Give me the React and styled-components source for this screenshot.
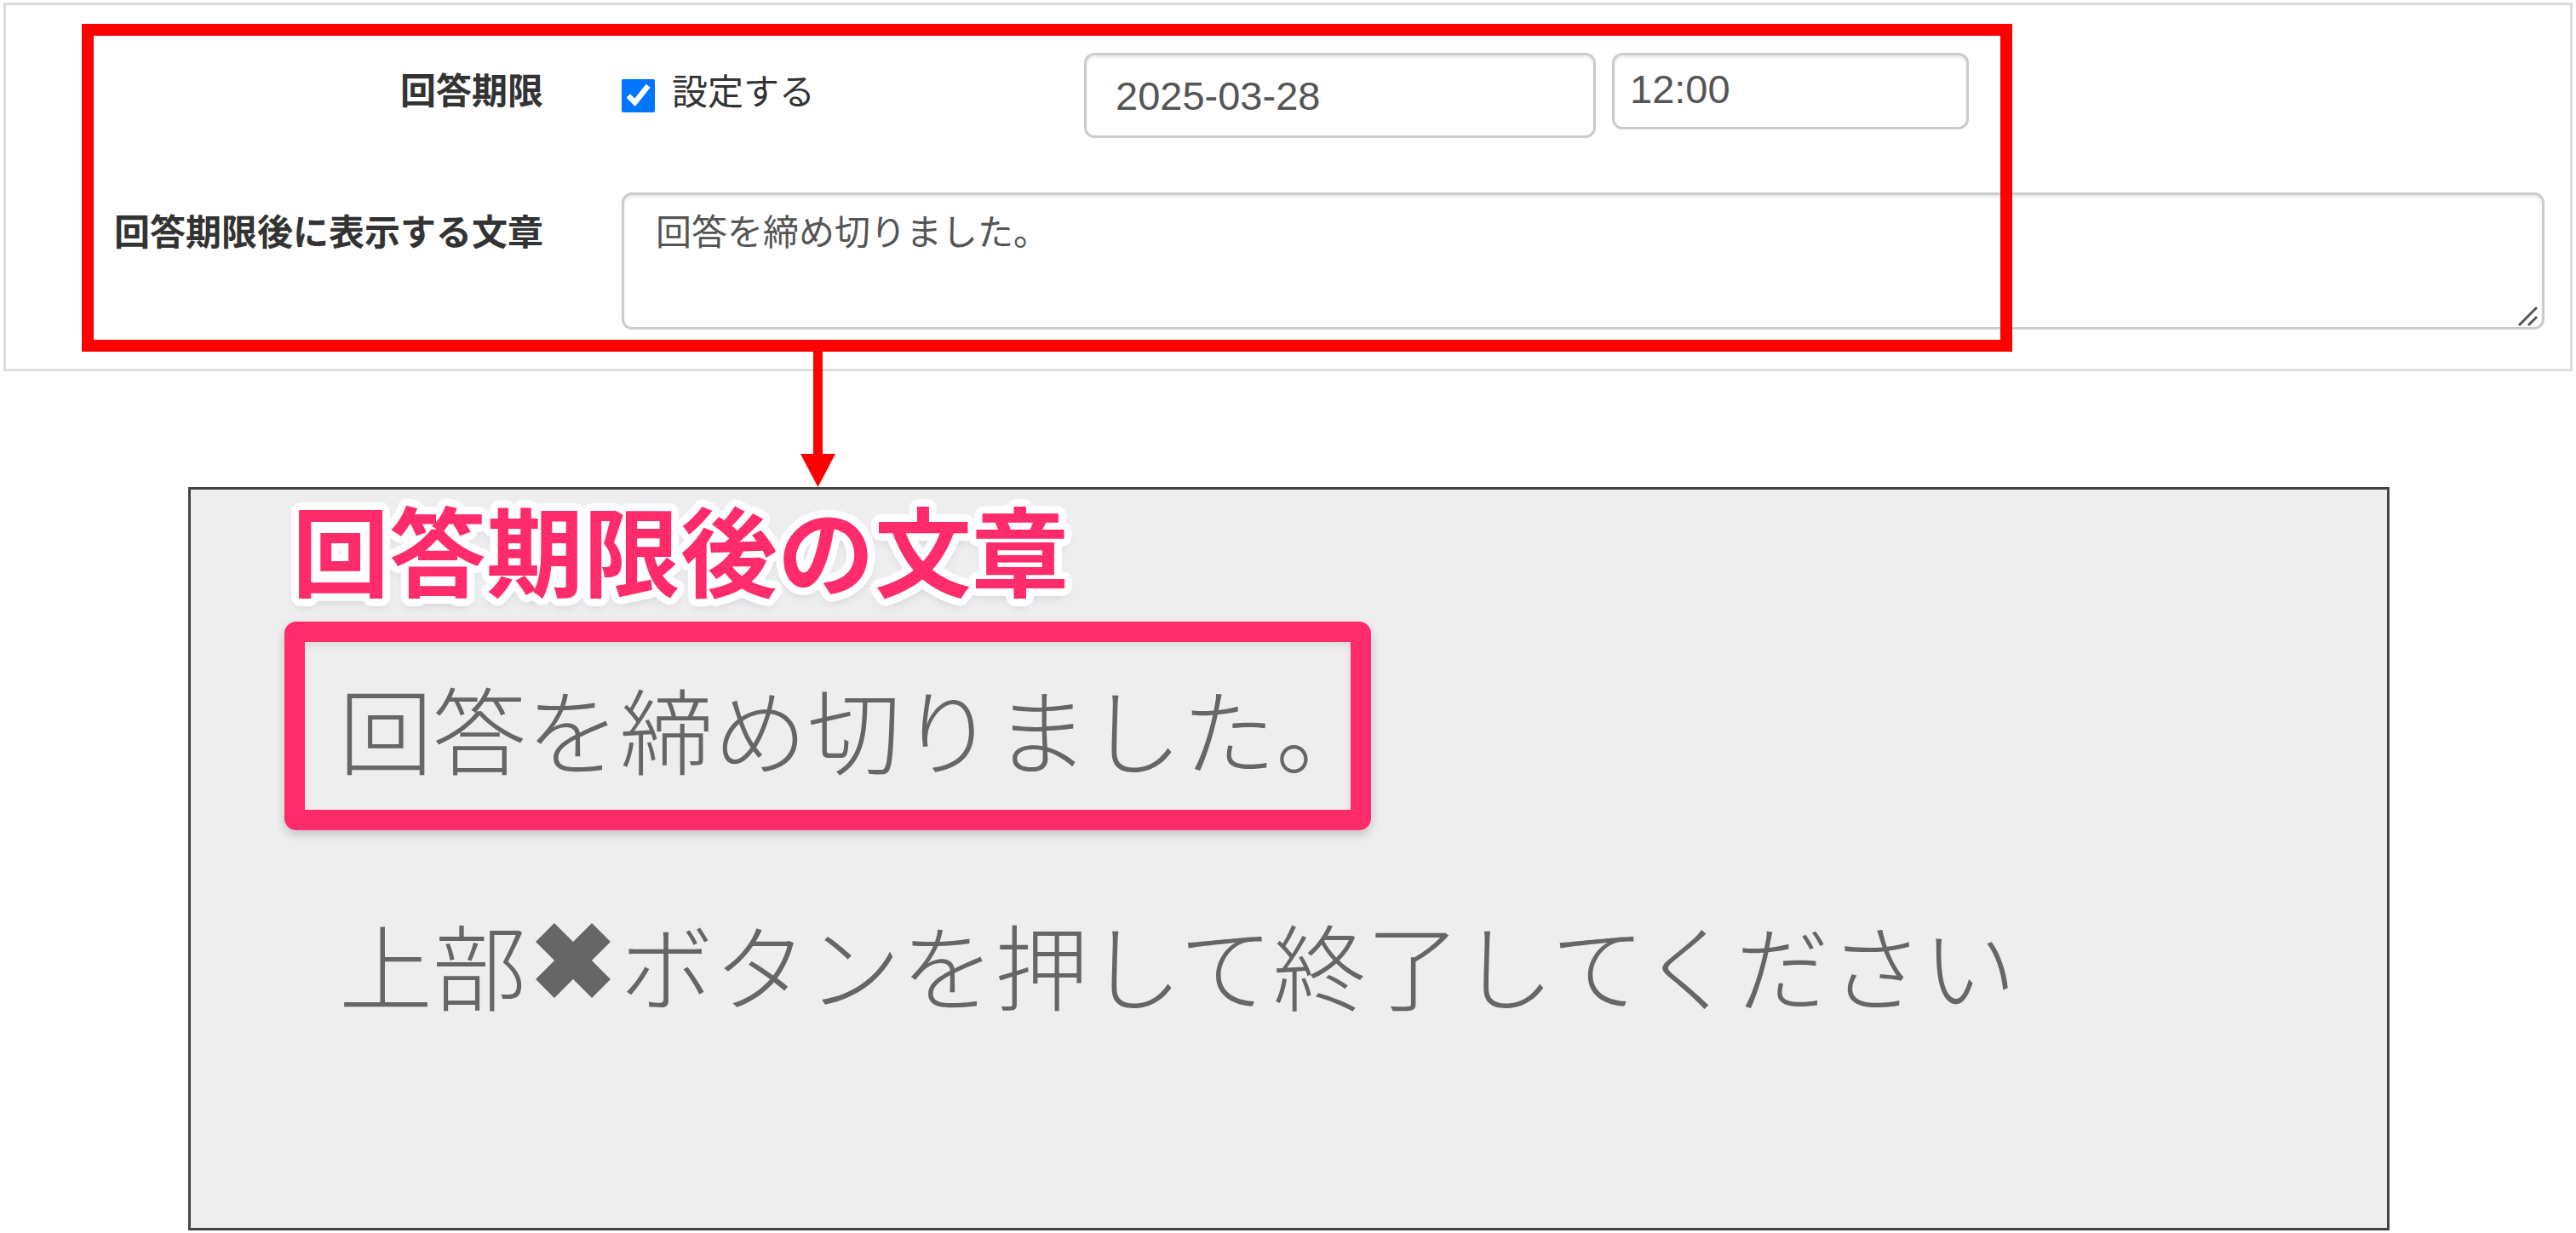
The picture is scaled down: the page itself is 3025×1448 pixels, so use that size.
import styled, { createGlobalStyle } from "styled-components";

const GlobalStyle = createGlobalStyle`
  html, body {
    margin: 0;
    padding: 0;
    background: #ffffff;
  }
  body {
    font-family: "Noto Sans CJK JP", "Noto Sans", sans-serif;
  }
`;

const Page = styled.div`
  position: relative;
  box-sizing: border-box;
  width: 3025px;
  height: 1448px;
  padding: 3px 4px 0;
  background: #ffffff;
`;

const FormPanel = styled.div`
  position: relative;
  box-sizing: border-box;
  border: 3px solid #dddddd;
  padding: 56px 30px 46px 0;
  display: flex;
  flex-direction: column;
  gap: 64px;
  background: #ffffff;
`;

const FormRow = styled.div`
  display: grid;
  grid-template-columns: 631px 1fr;
  column-gap: 92px;
  align-items: start;
`;

const FieldLabel = styled.div`
  padding-top: ${(p) => p.$top}px;
  text-align: right;
  font-size: 42px;
  line-height: 42px;
  font-weight: 700;
  color: #333333;
  white-space: nowrap;
`;

const Controls = styled.div`
  display: flex;
  align-items: flex-start;
`;

const CheckGroup = styled.label`
  display: flex;
  align-items: flex-start;
  width: 543px;
`;

const CheckBox = styled.input`
  width: 39px;
  height: 39px;
  margin: 31px 20px 0 0;
  accent-color: #0075ff;
`;

const CheckText = styled.span`
  padding-top: 22px;
  font-size: 42px;
  line-height: 42px;
  color: #333333;
`;

const TextInput = styled.input`
  box-sizing: border-box;
  width: ${(p) => p.$w}px;
  height: ${(p) => p.$h}px;
  margin-left: ${(p) => p.$ml || 0}px;
  padding: 0 0 ${(p) => p.$pb || 0}px ${(p) => p.$pl}px;
  border: 3px solid #cccccc;
  border-radius: 12px;
  box-shadow: inset 0 3px 3px rgba(0, 0, 0, 0.075);
  font-family: "Liberation Sans", Arial, sans-serif;
  font-size: 47px;
  color: #555555;
  background: #ffffff;
  outline: none;
`;

const AreaWrap = styled.div`
  position: relative;
  display: flex;
`;

const TextArea = styled.textarea`
  box-sizing: border-box;
  width: 100%;
  height: 161px;
  padding: 20px 37px;
  border: 3px solid #cccccc;
  border-radius: 12px;
  box-shadow: inset 0 3px 3px rgba(0, 0, 0, 0.075);
  font-family: "Noto Sans CJK JP", "Noto Sans", sans-serif;
  font-size: 42px;
  line-height: 42px;
  color: #555555;
  resize: none;
  outline: none;
`;

const Grip = styled.svg`
  position: absolute;
  right: 7px;
  bottom: 4px;
`;

const RedFrame = styled.div`
  position: absolute;
  left: 89px;
  top: 22px;
  width: 2267px;
  height: 385px;
  box-sizing: border-box;
  border: 14px solid #ff0000;
  pointer-events: none;
`;

const Arrow = styled.svg`
  position: absolute;
  left: 940px;
  top: 413px;
`;

const PreviewPanel = styled.div`
  box-sizing: border-box;
  width: 2585px;
  height: 873px;
  margin: 136px 0 0 217px;
  padding: 11px 0 0 110px;
  border: 3px solid #444444;
  background: #eeeeee;
  display: flex;
  flex-direction: column;
  align-items: flex-start;
  font-family: "Noto Sans CJK JP", "Noto Sans", sans-serif;
`;

const CalloutTitle = styled.div`
  margin-left: 9px;
  font-size: 114px;
  line-height: 114px;
  font-weight: 700;
  color: #ff2b6a;
  white-space: nowrap;
  text-shadow:
    9px 0 1px #fff, -9px 0 1px #fff, 0 9px 1px #fff, 0 -9px 1px #fff,
    6px 6px 1px #fff, -6px 6px 1px #fff, 6px -6px 1px #fff, -6px -6px 1px #fff,
    8px 4px 1px #fff, -8px 4px 1px #fff, 8px -4px 1px #fff, -8px -4px 1px #fff,
    4px 8px 1px #fff, -4px 8px 1px #fff, 4px -8px 1px #fff, -4px -8px 1px #fff,
    0 6px 14px rgba(0, 0, 0, 0.25);
`;

const Highlight = styled.div`
  box-sizing: border-box;
  width: 1276px;
  margin-top: 30px;
  padding: 45px 0 42px 40px;
  border: 24px solid #ff2b6a;
  border-radius: 14px;
  box-shadow: 0 5px 12px rgba(0, 0, 0, 0.18), inset 0 4px 10px rgba(0, 0, 0, 0.08);
`;

const PreviewText = styled.div`
  margin-top: ${(p) => p.$mt || 0}px;
  margin-left: ${(p) => p.$ml || 0}px;
  display: flex;
  align-items: center;
  font-size: 110px;
  line-height: 110px;
  font-weight: 300;
  color: #666666;
  white-space: nowrap;
`;

const CrossIcon = styled.svg`
  flex: none;
  margin-top: -6px;
`;

function App() {
  return (
    <Page>
      <GlobalStyle />
      <FormPanel>
        <FormRow>
          <FieldLabel $top={21}>回答期限</FieldLabel>
          <Controls>
            <CheckGroup>
              <CheckBox type="checkbox" defaultChecked />
              <CheckText>設定する</CheckText>
            </CheckGroup>
            <TextInput type="text" defaultValue="2025-03-28" $w={601} $h={100} $pl={34} />
            <TextInput type="text" defaultValue="12:00" $w={419} $h={90} $pl={18} $pb={6} $ml={19} />
          </Controls>
        </FormRow>
        <FormRow>
          <FieldLabel $top={23}>回答期限後に表示する文章</FieldLabel>
          <AreaWrap>
            <TextArea defaultValue="回答を締め切りました。" />
            <Grip width="26" height="26" viewBox="0 0 26 26">
              <line x1="3" y1="25" x2="24" y2="4" stroke="#555" strokeWidth="3" />
              <line x1="14" y1="25" x2="24" y2="15" stroke="#555" strokeWidth="3" />
            </Grip>
          </AreaWrap>
        </FormRow>
        <RedFrame />
      </FormPanel>

      <Arrow width="41" height="159" viewBox="0 0 41 159">
        <rect x="15" y="0" width="11" height="122" fill="#ff0000" />
        <polygon points="0,120 41,120 20.5,159" fill="#ff0000" />
      </Arrow>

      <PreviewPanel>
        <CalloutTitle>回答期限後の文章</CalloutTitle>
        <Highlight>
          <PreviewText>回答を締め切りました。</PreviewText>
        </Highlight>
        <PreviewText $mt={101} $ml={64}>
          上部
          <CrossIcon width="110" height="110" viewBox="0 0 110 110">
            <line x1="22" y1="22" x2="88" y2="88" stroke="#666" strokeWidth="31" />
            <line x1="88" y1="22" x2="22" y2="88" stroke="#666" strokeWidth="31" />
          </CrossIcon>
          ボタンを押して終了してください
        </PreviewText>
      </PreviewPanel>
    </Page>
  );
}

export default App;
